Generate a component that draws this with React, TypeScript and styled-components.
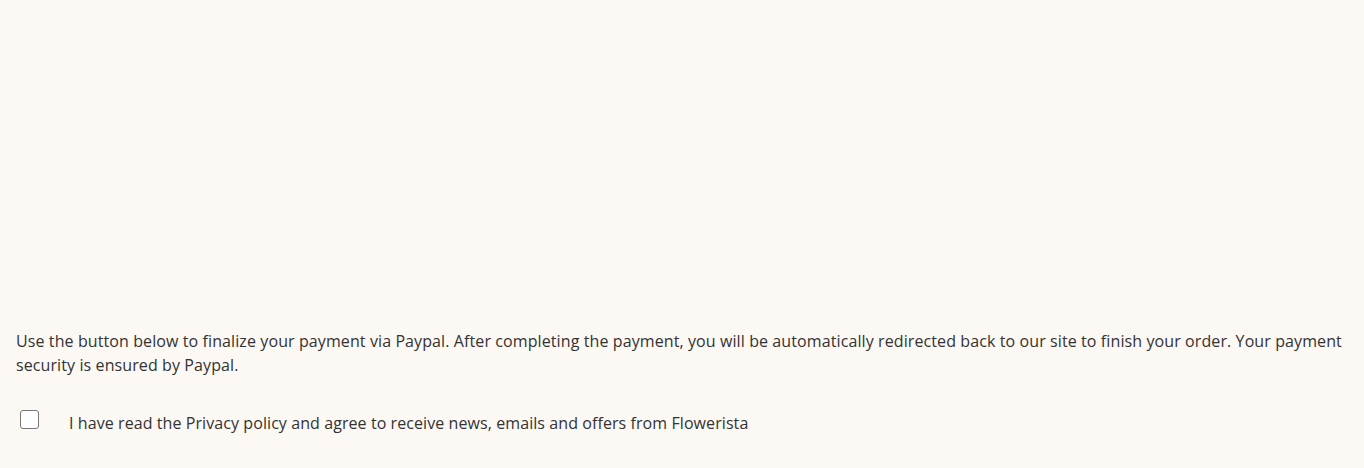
import React from "react";
import styled, { createGlobalStyle } from "styled-components";

const Global = createGlobalStyle`
  html, body { margin: 0; padding: 0; background: #fcf8f3; }
  body { font-family: "Open Sans", "Liberation Sans", sans-serif; color: #333333; }
`;

const Page = styled.main`
  box-sizing: border-box;
  min-height: 468px;
  padding: 329px 16px 0 16px;
  display: flex;
  flex-direction: column;
`;

const Note = styled.p`
  margin: 0;
  font-size: 16px;
  line-height: 24px;
  letter-spacing: 0.1px;
`;

const ConsentRow = styled.label`
  margin-top: 33px;
  display: flex;
  align-items: flex-start;
  gap: 30px;
  padding-left: 4px;
  font-size: 16px;
  line-height: 24px;
  letter-spacing: 0.08px;
  cursor: pointer;
`;

const Box = styled.span`
  box-sizing: border-box;
  flex: none;
  width: 19px;
  height: 19px;
  border: 1px solid #767676;
  border-radius: 3px;
  background: #ffffff;
`;

const LabelText = styled.span`
  padding-top: 1px;
`;

export default function App() {
  return (
    <>
      <Global />
      <Page>
        <Note>
          Use the button below to finalize your payment via Paypal. After completing the payment, you will be
          automatically redirected back to our site to finish your order. Your payment security is ensured by Paypal.
        </Note>
        <ConsentRow>
          <Box role="checkbox" aria-checked="false" />
          <LabelText>I have read the Privacy policy and agree to receive news, emails and offers from Flowerista</LabelText>
        </ConsentRow>
      </Page>
    </>
  );
}
